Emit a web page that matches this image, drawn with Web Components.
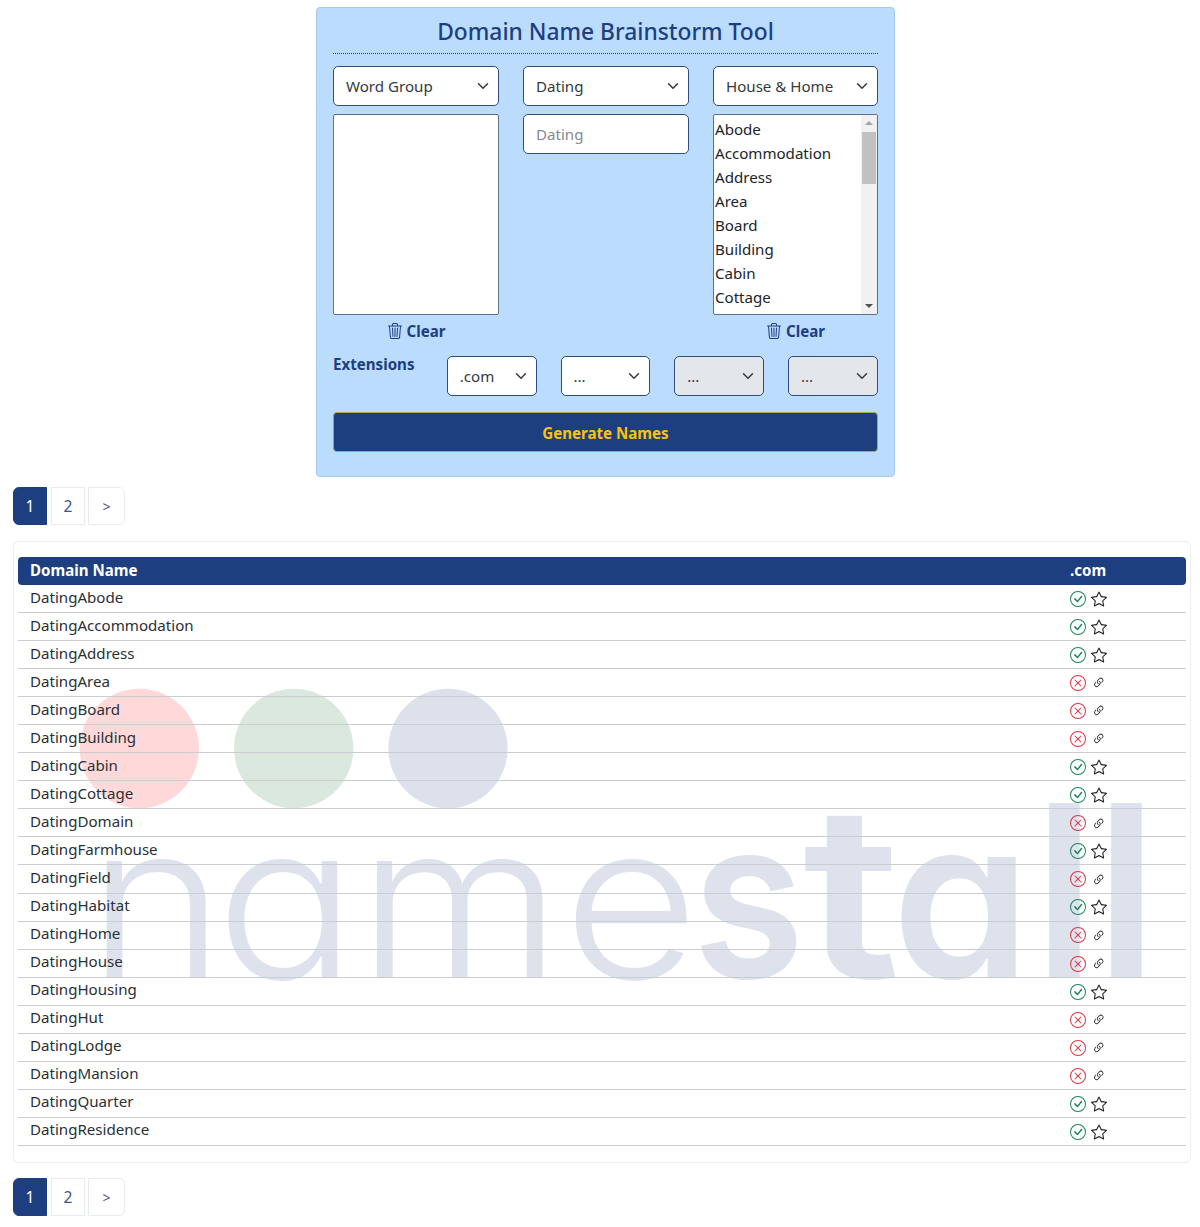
<!DOCTYPE html>
<html lang="en">
<head>
<meta charset="utf-8">
<title>Domain Name Brainstorm Tool</title>
<style>
    html, body { margin: 0; background: #fff; }
    body { font-family: "Noto Sans", "Open Sans", sans-serif; font-size: 15.1px; color: #212529; height: 1227px; overflow: hidden; }
</style>
</head>
<body>
<page-shell>
    <brainstorm-tool></brainstorm-tool>
    <page-nav></page-nav>
    <domain-table></domain-table>
    <page-nav class="below"></page-nav>
</page-shell>

<script>
// Bootstrap icon shapes used across the page
const RING = "M8 15A7 7 0 1 1 8 1a7 7 0 0 1 0 14zm0 1A8 8 0 1 0 8 0a8 8 0 0 0 0 16z";
const ICONS = {
    check: `<path d="${RING}"/><path d="M10.97 4.97a.235.235 0 0 0-.02.022L7.477 9.417 5.384 7.323a.75.75 0 0 0-1.06 1.06L6.97 11.03a.75.75 0 0 0 1.079-.02l3.992-4.99a.75.75 0 0 0-1.071-1.05z"/>`,
    cross: `<path d="${RING}"/><path d="M4.646 4.646a.5.5 0 0 1 .708 0L8 7.293l2.646-2.647a.5.5 0 0 1 .708.708L8.707 8l2.647 2.646a.5.5 0 0 1-.708.708L8 8.707l-2.646 2.647a.5.5 0 0 1-.708-.708L7.293 8 4.646 5.354a.5.5 0 0 1 0-.708z"/>`,
    star: `<path d="M2.866 14.85c-.078.444.36.791.746.593l4.39-2.256 4.389 2.256c.386.198.824-.149.746-.592l-.83-4.73 3.522-3.356c.33-.314.16-.888-.282-.95l-4.898-.696L8.465.792a.513.513 0 0 0-.927 0L5.354 5.12l-4.898.696c-.441.062-.612.636-.283.95l3.523 3.356-.83 4.73zm4.905-2.767-3.686 1.894.694-3.957a.565.565 0 0 0-.163-.505L1.71 6.745l4.052-.576a.525.525 0 0 0 .393-.288L8 2.223l1.847 3.658a.525.525 0 0 0 .393.288l4.052.575-2.906 2.77a.565.565 0 0 0-.163.506l.694 3.957-3.686-1.894a.503.503 0 0 0-.461 0z"/>`,
    link: `<path d="M4.715 6.542 3.343 7.914a3 3 0 1 0 4.243 4.243l1.828-1.829A3 3 0 0 0 8.586 5.5L8 6.086a1.002 1.002 0 0 0-.154.199 2 2 0 0 1 .861 3.337L6.88 11.45a2 2 0 1 1-2.83-2.83l.793-.792a4.018 4.018 0 0 1-.128-1.287z"/><path d="M6.586 4.672A3 3 0 0 0 7.414 9.5l.775-.776a2 2 0 0 1-.896-3.346L9.12 3.55a2 2 0 1 1 2.83 2.83l-.793.792c.112.42.155.855.128 1.287l1.372-1.372a3 3 0 1 0-4.243-4.243L6.586 4.672z"/>`,
    trash: `<path d="M6.5 1h3a.5.5 0 0 1 .5.5v1H6v-1a.5.5 0 0 1 .5-.5ZM11 2.5v-1A1.5 1.5 0 0 0 9.5 0h-3A1.5 1.5 0 0 0 5 1.5v1H2.506a.58.58 0 0 0-.01 0H1.5a.5.5 0 0 0 0 1h.538l.853 10.66A2 2 0 0 0 4.885 16h6.23a2 2 0 0 0 1.994-1.84l.853-10.66h.538a.5.5 0 0 0 0-1h-.995a.59.59 0 0 0-.01 0H11Zm1.958 1-.846 10.58a1 1 0 0 1-.997.92h-6.23a1 1 0 0 1-.997-.92L3.042 3.5h9.916Zm-7.487 1a.5.5 0 0 1 .528.47l.5 8.5a.5.5 0 0 1-.998.06L5 5.03a.5.5 0 0 1 .47-.53Zm5.058 0a.5.5 0 0 1 .47.53l-.5 8.5a.5.5 0 1 1-.998-.06l.5-8.5a.5.5 0 0 1 .528-.47ZM8 4.5a.5.5 0 0 1 .5.5v8.5a.5.5 0 0 1-1 0V5a.5.5 0 0 1 .5-.5Z"/>`
};

const icon = (name, size, color) =>
    `<svg xmlns="http://www.w3.org/2000/svg" width="${size}" height="${size}" viewBox="0 0 16 16" fill="${color}">${ICONS[name]}</svg>`;

// Page wrapper, holds the sections in one column
class PageShell extends HTMLElement {
    constructor() {
        super();
        this.attachShadow({ mode: "open" });
        this.shadowRoot.innerHTML = `
            <style>
                :host { display: flex; flex-direction: column; padding: 7px 9px 0 13px; }
            </style>
            <slot></slot>
        `;
    }
}

// Closed dropdown look: label and chevron
class SelectBox extends HTMLElement {
    constructor() {
        super();
        this.attachShadow({ mode: "open" });
        this.shadowRoot.innerHTML = `
            <style>
                :host {
                    display: flex; align-items: center; justify-content: space-between;
                    box-sizing: border-box; height: 40px; padding: 0 9px 0 12px;
                    background: #fff; border: 1px solid #2f4d80; border-radius: 5px;
                    color: #343a40; white-space: nowrap;
                }
                :host([disabled]) { background: #e4e7ea; }
                svg { flex: none; }
            </style>
            <span><slot></slot></span>
            <svg width="12" height="12" viewBox="0 0 16 16" fill="none" stroke="#343a40" stroke-width="2" stroke-linecap="round" stroke-linejoin="round"><path d="m2 5 6 6 6-6"/></svg>
        `;
    }
}

// Multi line list with a painted scrollbar
class WordList extends HTMLElement {
    constructor() {
        super();
        this.attachShadow({ mode: "open" });
        const words = (this.getAttribute("words") || "").split(",").filter(Boolean);
        this.shadowRoot.innerHTML = `
            <style>
                :host {
                    display: flex; box-sizing: border-box; height: 201px; overflow: hidden;
                    background: #fff; border: 1px solid #5c6f8d; border-radius: 2px;
                }
                .items { flex: 1; padding: 1.5px 0 0 1px; }
                .items div { height: 24px; line-height: 24px; white-space: nowrap; color: #212529; }
                .bar { display: ${words.length ? "flex" : "none"}; flex-direction: column; align-items: center; width: 16px; background: #f1f1f1; }
                .bar i { display: block; width: 0; height: 0; border: 4px solid transparent; }
                .up { border-bottom-color: #a3a3a3 !important; border-top-width: 0 !important; margin-top: 6px; }
                .thumb { width: 14px; height: 52px; background: #c1c1c1; margin-top: 7px; flex: none; }
                .down { border-top-color: #505050 !important; border-bottom-width: 0 !important; margin-top: auto; margin-bottom: 6px; }
            </style>
            <div class="items">${words.map(w => `<div>${w}</div>`).join("")}</div>
            <div class="bar"><i class="up"></i><div class="thumb"></div><i class="down"></i></div>
        `;
    }
}

// Trash icon and Clear label under a list
class ClearLink extends HTMLElement {
    constructor() {
        super();
        this.attachShadow({ mode: "open" });
        this.shadowRoot.innerHTML = `
            <style>
                :host {
                    display: flex; align-items: center; justify-content: center; gap: 4px;
                    height: 32px; color: #1d3f7f; font-weight: 700;
                }
            </style>
            ${icon("trash", 16, "#1d3f7f")}<span>Clear</span>
        `;
    }
}

// The blue form card at the top
class BrainstormTool extends HTMLElement {
    constructor() {
        super();
        this.attachShadow({ mode: "open" });
        const words = "Abode,Accommodation,Address,Area,Board,Building,Cabin,Cottage";
        this.shadowRoot.innerHTML = `
            <style>
                :host {
                    display: block; box-sizing: border-box; width: 579px; height: 470px;
                    margin-left: 303px; padding: 0 16px;
                    background: #bbdcfd; border: 1px solid #a9c9e8; border-radius: 4px;
                }
                h1 {
                    margin: 0; height: 45px; line-height: 47px; text-align: center;
                    font-size: 22.8px; font-weight: 500; color: #1d3f7f;
                    border-bottom: 1px dotted #1d3f7f; white-space: nowrap;
                }
                .cols { display: grid; grid-template-columns: 166px 166px 165px; gap: 8px 24px; margin-top: 12px; align-items: start; }
                .entry {
                    box-sizing: border-box; height: 40px; line-height: 38px; padding: 0 12px;
                    background: #fff; border: 1px solid #2f4d80; border-radius: 5px; color: #85898e;
                }
                .ext { display: grid; grid-template-columns: repeat(5, 89.75px); column-gap: 24px; height: 40px; margin-top: 9px; }
                .ext b { color: #1d3f7f; margin-top: -2px; line-height: 20px; white-space: nowrap; }
                .go {
                    display: flex; align-items: center; justify-content: center;
                    box-sizing: border-box; height: 40px; margin-top: 16px; padding-top: 1px;
                    background: #1d3f7f; border: 1px solid #a3ab4e; border-radius: 4px;
                    color: #ffc107; font-weight: 700;
                }
            </style>
            <h1>Domain Name Brainstorm Tool</h1>
            <div class="cols">
                <select-box>Word Group</select-box>
                <select-box>Dating</select-box>
                <select-box>House &amp; Home</select-box>
                <word-list></word-list>
                <div class="entry">Dating</div>
                <word-list words="${words}"></word-list>
            </div>
            <div class="cols" style="margin-top:0;row-gap:0">
                <clear-link></clear-link><div></div><clear-link></clear-link>
            </div>
            <div class="ext">
                <b>Extensions</b>
                <select-box>.com</select-box>
                <select-box>...</select-box>
                <select-box disabled>...</select-box>
                <select-box disabled>...</select-box>
            </div>
            <div class="go">Generate Names</div>
        `;
    }
}

// Pagination buttons
class PageNav extends HTMLElement {
    constructor() {
        super();
        this.attachShadow({ mode: "open" });
        this.shadowRoot.innerHTML = `
            <style>
                :host { display: flex; gap: 3px; margin-top: 10px; height: 38px; }
                :host(.below) { margin-top: 15px; }
                div {
                    display: flex; align-items: center; justify-content: center;
                    box-sizing: border-box; width: 34px; height: 38px;
                    background: #fff; border: 1px solid #e9ecef; color: #3d5688; font-size: 15.6px;
                }
                .on { margin-right: 1px; background: #1d3f7f; border-color: #1d3f7f; color: #fff; border-radius: 6px 0 0 6px; }
                .last { width: 37px; border-radius: 0 6px 6px 0; font-size: 14px; }
            </style>
            <div class="on">1</div><div>2</div><div class="last">&gt;</div>
        `;
    }
}

// Availability icons for one domain
class DomainRow extends HTMLElement {
    constructor() {
        super();
        this.attachShadow({ mode: "open" });
        const free = this.hasAttribute("free");
        this.shadowRoot.innerHTML = `
            <style>
                :host {
                    display: grid; grid-template-columns: 1fr 116px; align-items: center;
                    height: 28.05px; box-sizing: border-box; padding-left: 12px;
                    border-bottom: 1px solid #c9ccd1;
                }
                span { padding-bottom: 4px; white-space: nowrap; color: #2b3035; }
                .marks { display: flex; align-items: center; gap: 5px; margin-top: .8px; }
                .slot { display: flex; align-items: center; justify-content: center; width: 16px; height: 16px; }
            </style>
            <span><slot></slot></span>
            <div class="marks">
                ${free ? icon("check", 16, "#198754") : icon("cross", 16, "#dc3545")}
                <div class="slot">${free ? icon("star", 16, "#212529") : icon("link", 13.5, "#212529")}</div>
            </div>
        `;
    }
}

// Results card with the watermark behind the rows
class DomainTable extends HTMLElement {
    constructor() {
        super();
        this.attachShadow({ mode: "open" });
        const rows = [
            ["Abode", 1], ["Accommodation", 1], ["Address", 1], ["Area", 0], ["Board", 0],
            ["Building", 0], ["Cabin", 1], ["Cottage", 1], ["Domain", 0], ["Farmhouse", 1],
            ["Field", 0], ["Habitat", 1], ["Home", 0], ["House", 0], ["Housing", 1],
            ["Hut", 0], ["Lodge", 0], ["Mansion", 0], ["Quarter", 1], ["Residence", 1]
        ];
        this.shadowRoot.innerHTML = `
            <style>
                :host {
                    display: block; position: relative; box-sizing: border-box; height: 622px;
                    margin-top: 16px; padding: 15px 4px 0;
                    border: 1px solid #eceef0; border-radius: 6px;
                }
                .mark { position: absolute; left: -1px; top: -1px; width: 1178px; height: 622px; }
                .mark text { font-family: Inter, sans-serif; font-feature-settings: "cv11"; fill: #dde2ec; }
                .body { position: relative; }
                .head {
                    display: grid; grid-template-columns: 1fr 116px; align-items: center;
                    height: 28px; padding-left: 12px;
                    background: #1d3f7f; color: #fff; font-weight: 700; border-radius: 4px;
                }
                .head span { padding-bottom: 2px; }
            </style>
            <svg class="mark" viewBox="13 541 1178 622" aria-hidden="true">
                <circle cx="139.3" cy="748.5" r="59.7" fill="#ffd9d9"/>
                <circle cx="293.7" cy="748.5" r="59.7" fill="#dbe8de"/>
                <circle cx="448" cy="748.5" r="59.7" fill="#dce1eb"/>
                <text transform="translate(0 978) scale(1.09 1)" font-size="215" font-weight="360" x="80 198 328 516.5">name</text>
                <text transform="translate(0 978) scale(.92 1)" font-size="222" font-weight="620" x="752.8">s</text>
                <text transform="translate(0 978) scale(1.15 1)" font-size="240" font-weight="620" x="698">t</text>
                <text y="978" font-size="222" font-weight="620" x="892">a</text>
                <text y="978" font-size="240" font-weight="560" x="1033 1095">ll</text>
            </svg>
            <div class="body">
                <div class="head"><span>Domain Name</span><span>.com</span></div>
                ${rows.map(([w, ok]) => `<domain-row ${ok ? "free" : ""}>Dating${w}</domain-row>`).join("")}
            </div>
        `;
    }
}

//Register the custom elements with the browser
customElements.define("select-box", SelectBox);
customElements.define("word-list", WordList);
customElements.define("clear-link", ClearLink);
customElements.define("brainstorm-tool", BrainstormTool);
customElements.define("page-nav", PageNav);
customElements.define("domain-row", DomainRow);
customElements.define("domain-table", DomainTable);
customElements.define("page-shell", PageShell);
</script>
</body>
</html>
